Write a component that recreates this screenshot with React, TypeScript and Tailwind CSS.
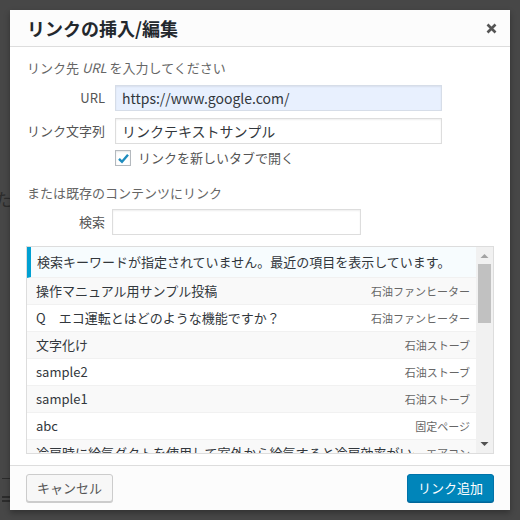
import React from 'react'

const rows = [
  { title: '操作マニュアル用サンプル投稿', info: '石油ファンヒーター' },
  { title: 'Q　エコ運転とはどのような機能ですか？', info: '石油ファンヒーター' },
  { title: '文字化け', info: '石油ストーブ' },
  { title: 'sample2', info: '石油ストーブ' },
  { title: 'sample1', info: '石油ストーブ' },
  { title: 'abc', info: '固定ページ' },
  { title: '冷房時に給気ダクトを使用して室外から給気すると冷房効率がい…', info: 'エアコン' },
]

const FieldRow = ({
  label,
  value,
  filled,
}: {
  label: string
  value: string
  filled?: boolean
}) => (
  <div className="flex items-center h-[26px]">
    <label className="w-[79px] text-right text-[13px] text-[#555]">{label}</label>
    <input
      type="text"
      readOnly
      value={value}
      className={`ml-[10px] w-[327px] h-[26px] border px-[6px] text-[14px] text-[#32373c] outline-none shadow-[inset_0_1px_2px_rgba(0,0,0,0.07)] ${
        filled ? 'bg-[#e8f0fe] border-[#d6dde8]' : 'bg-white border-[#ddd]'
      }`}
    />
  </div>
)

export default function App() {
  return (
    <div className="relative w-[520px] h-[520px] overflow-hidden bg-[#474747] p-[10px] font-['Noto_Sans_CJK_JP',sans-serif]">
      {/* page underneath the overlay */}
      <span className="absolute left-[-5px] top-[186px] text-[17px] text-[#2c2c2c]">た</span>
      <div className="absolute left-[2px] top-[478px] w-[8px] h-[1px] bg-[#2c2c2c]" />
      <div className="absolute left-[2px] top-[496px] w-[8px] h-[6px] border-y-2 border-[#2c2c2c]" />

      <div className="relative flex flex-col w-full h-full bg-white shadow-[0_3px_6px_rgba(0,0,0,0.3)]">
        <div className="flex items-center justify-between h-[37px] bg-[#fcfcfc] border-b border-[#ddd] pl-[17px] pr-[13px]">
          <h1 className="text-[18px] font-bold text-[#23282d] leading-none">リンクの挿入/編集</h1>
          <svg width="11" height="11" viewBox="0 0 11 11">
            <path d="M1.5 1.5 L9.5 9.5 M9.5 1.5 L1.5 9.5" stroke="#555" strokeWidth="2.6" />
          </svg>
        </div>

        <div className="flex-1 flex flex-col px-4">
          <p className="mt-[11px] h-[20px] leading-[20px] pl-px text-[13px] text-[#666]">
            リンク先 <i>URL</i> を入力してください
          </p>
          <div className="mt-[7px]">
            <FieldRow label="URL" value="https://www.google.com/" filled />
          </div>
          <div className="mt-[7px]">
            <FieldRow label="リンク文字列" value="リンクテキストサンプル" />
          </div>
          <div className="mt-[6px] flex items-center h-[16px] pl-[89px]">
            <span className="flex items-center justify-center w-[16px] h-[16px] border border-[#b4b9be] bg-white shadow-[inset_0_1px_2px_rgba(0,0,0,0.1)]">
              <svg width="13" height="13" viewBox="0 0 13 13">
                <path d="M2 6.8 L5 9.8 L11 2.8" fill="none" stroke="#1e8cbe" strokeWidth="2.4" />
              </svg>
            </span>
            <span className="ml-[7px] text-[13px] text-[#555]">リンクを新しいタブで開く</span>
          </div>
          <p className="mt-[17px] h-[20px] leading-[20px] pl-px text-[13px] text-[#666]">
            または既存のコンテンツにリンク
          </p>
          <div className="mt-[6px] flex items-center h-[26px]">
            <label className="w-[79px] text-right text-[13px] text-[#555]">検索</label>
            <input
              type="text"
              readOnly
              className="ml-[7px] w-[249px] h-[26px] border border-[#ddd] bg-white outline-none shadow-[inset_0_1px_2px_rgba(0,0,0,0.07)]"
            />
          </div>

          <div className="mt-[11px] h-[208px] border border-[#ddd] flex">
            <div className="flex-1 overflow-hidden">
              <div className="h-[31px] flex items-center bg-[#f7fcfe] border-l-4 border-[#00a0d2] border-b border-b-[#f1f1f1] pl-[6px] text-[13px] text-[#32373c] whitespace-nowrap">
                検索キーワードが指定されていません。最近の項目を表示しています。
              </div>
              {rows.map((r, i) => (
                <div
                  key={i}
                  className={`h-[27px] flex items-center justify-between border-b border-[#f1f1f1] pl-[9px] pr-[6px] whitespace-nowrap ${
                    i % 2 === 0 ? 'bg-[#f9f9f9]' : 'bg-white'
                  }`}
                >
                  <span className="text-[13px] text-[#32373c] overflow-hidden">{r.title}</span>
                  <span className="ml-3 text-[11px] text-[#666] shrink-0">{r.info}</span>
                </div>
              ))}
            </div>
            <div className="w-[17px] bg-[#f1f1f1] flex flex-col items-center">
              <svg width="9" height="17" viewBox="0 0 9 17" className="shrink-0">
                <path d="M0.5 11 L4.5 7 L8.5 11 Z" fill="#a3a3a3" />
              </svg>
              <div className="w-[13px] h-[59px] bg-[#c1c1c1]" />
              <div className="flex-1" />
              <svg width="9" height="17" viewBox="0 0 9 17" className="shrink-0">
                <path d="M0.5 6 L4.5 10 L8.5 6 Z" fill="#505050" />
              </svg>
            </div>
          </div>
        </div>

        <div className="h-[45px] border-t border-[#ddd] bg-[#fcfcfc] flex items-center justify-between px-4">
          <button className="w-[87px] h-[28px] rounded-[3px] border border-[#ccc] bg-[#f7f7f7] shadow-[0_1px_0_#ccc] text-[13px] text-[#555]">
            キャンセル
          </button>
          <button className="w-[87px] h-[28px] rounded-[3px] border border-[#0073aa] bg-[#0085ba] shadow-[0_1px_0_#006799] text-[13px] text-white">
            リンク追加
          </button>
        </div>
      </div>
    </div>
  )
}
